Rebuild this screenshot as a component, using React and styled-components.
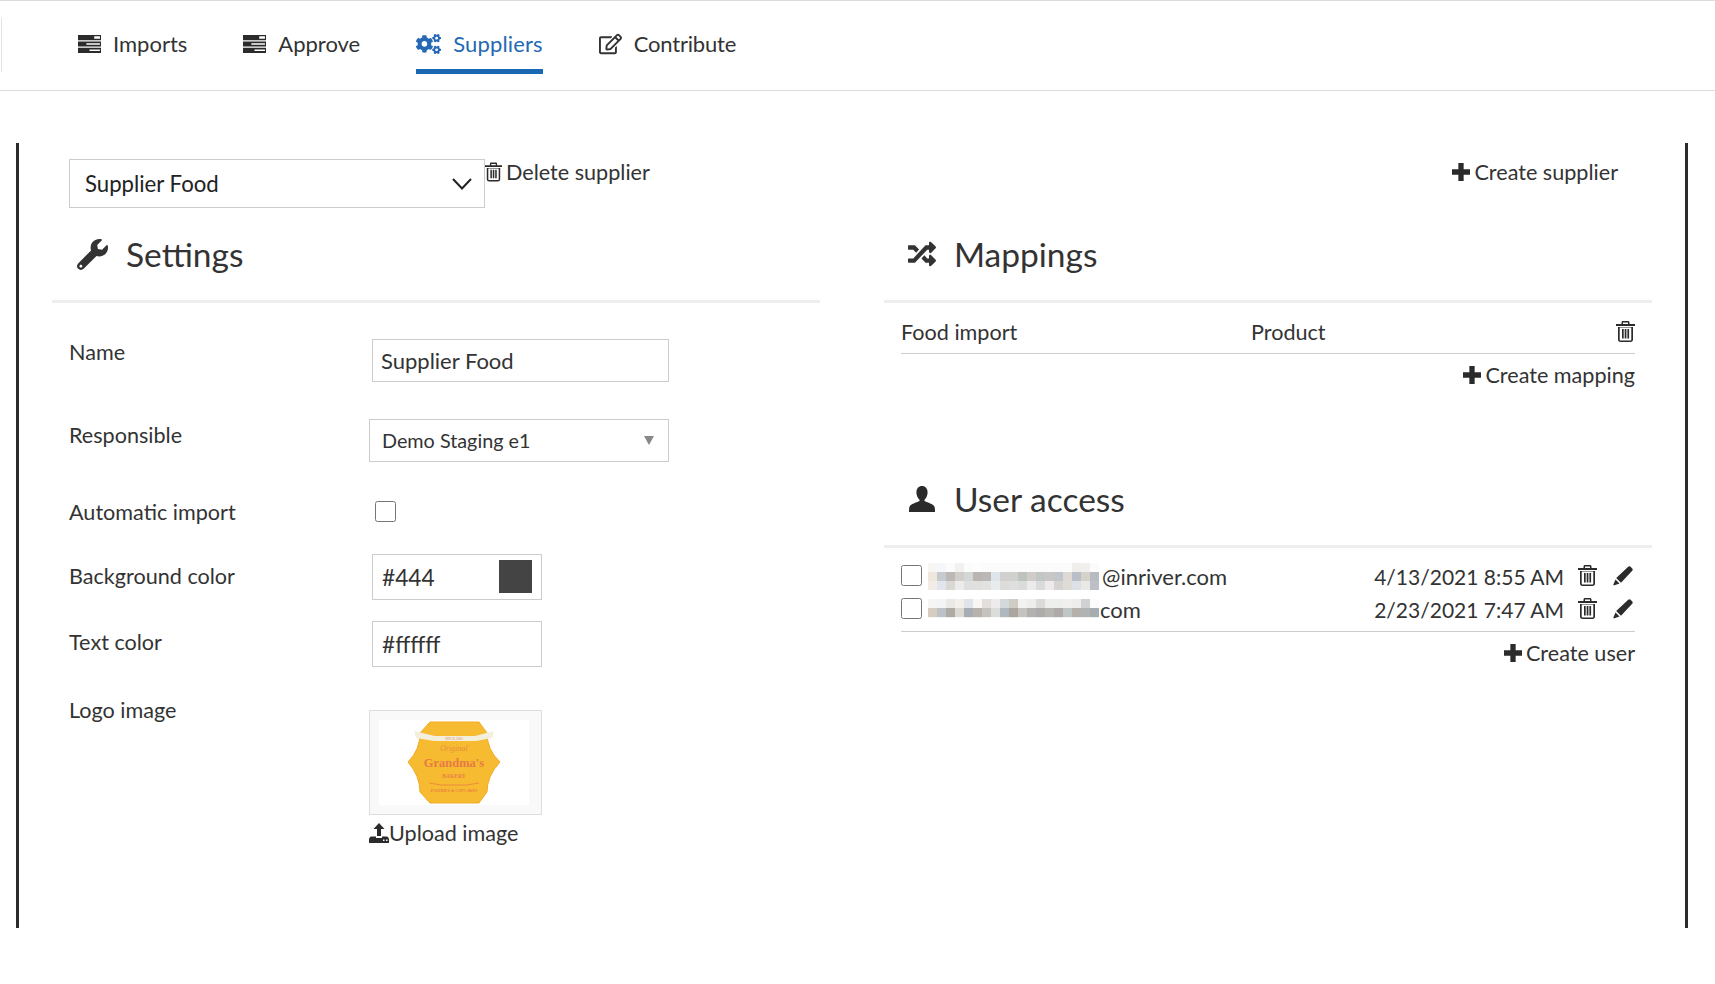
import React from 'react';
import styled, { createGlobalStyle } from 'styled-components';
import { FaCogs, FaRegEdit, FaWrench, FaRandom } from 'react-icons/fa';

const Global = createGlobalStyle`
  html, body { margin: 0; padding: 0; background: #fff; }
  body {
    font-family: Lato, "Liberation Sans", sans-serif;
    font-size: 21.6px;
    line-height: 28px;
    color: #333;
  }
`;

const Nav = styled.nav`
  position: relative;
  display: flex;
  gap: 56px;
  height: 89px;
  padding-left: 78px;
  border-top: 1px solid #dcdcdc;
  border-bottom: 1px solid #dcdcdc;

  &::before {
    content: '';
    position: absolute;
    left: 1px;
    top: 17px;
    height: 54px;
    border-left: 1px solid #e4e4e4;
  }
`;

const NavItem = styled.a`
  display: flex;
  align-items: flex-start;
  gap: ${(p) => p.$gap}px;
  height: 73px;
  padding-top: 29px;
  box-sizing: border-box;
  font-size: 22px;
  font-weight: 400;
  letter-spacing: ${(p) => p.$track || 0}px;
  color: ${(p) => (p.$active ? '#2569b4' : '#333')};
  border-bottom: ${(p) => (p.$active ? '5px solid #1a67b2' : '0')};
  margin-bottom: auto;

  svg {
    flex: none;
    width: ${(p) => p.$icon}px;
    height: 22px;
    margin-top: 3px;
  }
`;

const Main = styled.main`
  box-sizing: border-box;
  margin: 52px 27px 0 16px;
  height: 785px;
  padding: 16px 33px 0 33px;
  border-left: 3px solid #2b2b2b;
  border-right: 3px solid #2b2b2b;
`;

const TopBar = styled.div`
  display: flex;
  align-items: flex-start;
  padding: 0 34px 0 17px;
`;

const SupplierSelect = styled.div`
  display: flex;
  align-items: center;
  justify-content: space-between;
  box-sizing: border-box;
  width: 416px;
  height: 49px;
  padding: 0 12px 0 15px;
  border: 1px solid #ccc;
  font-size: 22.2px;
  color: #222;
`;

const LinkBtn = styled.a`
  display: inline-flex;
  align-items: center;
  gap: ${(p) => (p.$gap === undefined ? 4 : p.$gap)}px;
  color: #333;
  white-space: nowrap;

  svg {
    flex: none;
  }
`;

const TopLink = styled(LinkBtn)`
  margin-top: -1px;
`;

const PushRight = styled.div`
  display: flex;
  margin-left: auto;
`;

const Columns = styled.div`
  display: grid;
  grid-template-columns: 768px 768px;
  column-gap: 64px;
`;

const SectionHeader = styled.div`
  display: flex;
  align-items: center;
  box-sizing: border-box;
  height: 95px;
  padding: 0 0 0 ${(p) => p.$pad}px;
  border-bottom: 3px solid #eee;
  font-size: 33.5px;
  line-height: 40px;
  color: #333;

  svg {
    flex: none;
    margin-right: ${(p) => p.$gap}px;
  }
`;

const FormRow = styled.div`
  display: grid;
  grid-template-columns: 300px 1fr;
  padding-left: 17px;
  margin-top: ${(p) => p.$top}px;
`;

const Label = styled.div`
  margin-top: ${(p) => p.$top || 0}px;
`;

const TextInput = styled.input`
  display: block;
  box-sizing: border-box;
  width: ${(p) => p.$w}px;
  height: ${(p) => p.$h}px;
  margin-left: 3px;
  padding: 0 ${(p) => p.$padX}px;
  border: 1px solid #ccc;
  border-radius: 0;
  font: 400 ${(p) => p.$fs}px Lato, sans-serif;
  color: #333;
  outline: none;
`;

const ResponsibleSelect = styled.div`
  display: flex;
  align-items: center;
  justify-content: space-between;
  box-sizing: border-box;
  width: 300px;
  height: 43px;
  padding: 0 14px 1px 12px;
  border: 1px solid #ccc;
  font-size: 19.8px;
`;

const Caret = styled.span`
  width: 0;
  height: 0;
  margin-top: 1px;
  border-left: 5.5px solid transparent;
  border-right: 5.5px solid transparent;
  border-top: 9px solid #888;
`;

const CheckBox = styled.input.attrs({ type: 'checkbox' })`
  display: block;
  width: 21px;
  height: 21px;
  margin: ${(p) => p.$margin};
`;

const ColorField = styled.div`
  position: relative;
  width: 173px;
`;

const Swatch = styled.span`
  position: absolute;
  right: 10px;
  top: 6px;
  width: 33px;
  height: 33px;
  background: #444;
`;

const LogoBox = styled.div`
  box-sizing: border-box;
  width: 173px;
  height: 105px;
  margin-top: 13px;
  padding: 9px;
  background: #f9f9f9;
  border: 1px solid #ddd;

  svg {
    display: block;
  }
`;

const UploadLink = styled(LinkBtn)`
  margin-top: 4px;
`;

const MappingRow = styled.div`
  display: grid;
  grid-template-columns: 350px 1fr auto;
  align-items: center;
  height: 51px;
  margin: 0 17px;
  box-sizing: border-box;
  padding-top: 8px;
  border-bottom: 1px solid #ccc;
`;

const MappingDelete = styled.span`
  display: flex;
  margin-bottom: 2px;
`;

const RightAction = styled.div`
  display: flex;
  justify-content: flex-end;
  margin: 7px 17px 0;
`;

const UserHeaderWrap = styled.div`
  margin-top: 64px;
`;

const UserList = styled.div`
  margin: 0 17px;
  padding: 12px 0 5px;
  border-bottom: 1px solid #ccc;
`;

const UserRow = styled.div`
  display: flex;
  align-items: center;
  height: 33px;
`;

const UserCheck = styled(CheckBox)`
  position: relative;
  top: -1px;
`;

const Email = styled.span`
  display: flex;
  align-items: center;
  margin-left: 6px;
  flex: 1;
  font-size: 22px;

  svg {
    flex: none;
    margin-right: ${(p) => p.$after}px;
  }
`;

const DateText = styled.span`
  font-size: 21px;
  white-space: nowrap;
`;

const RowIcons = styled.span`
  display: flex;
  align-items: center;
  gap: 16px;
  margin: 0 2px 2px 14px;
`;

const TasksIcon = () => (
  <svg viewBox="0 0 22 17" fill="#2b2b2b">
    <path fillRule="evenodd" d="M0 0h22v5H0zM15.500 1.200v2.300h5.500V1.200zM0 6h22v5H0zM8 7.800v1.300h13V7.800zM0 12h22v5H0zM11 13.800v1.400h10v-1.400z" />
  </svg>
);

const TrashIcon = ({ w = 19, h = 21 }) => (
  <svg width={w} height={h} viewBox="0 0 19 21" fill="#2b2b2b">
    <path d="M5.500 3V1.500C5.500.6 6.100 0 7 0h5c.9 0 1.500.6 1.500 1.500V3H19v2H0V3zM7 1.500V3h5V1.500z" fillRule="evenodd" />
    <path fillRule="evenodd" d="M2 6h15v12.500c0 1.500-1 2.500-2.500 2.500h-10C3 21 2 20 2 18.500zM3.700 6.500v12c0 .6.400 1 1 1h9.600c.6 0 1-.4 1-1v-12z" />
    <path d="M6 8h1.700v9.500H6zM8.700 8h1.700v9.500H8.700zM11.400 8h1.700v9.500h-1.700z" />
  </svg>
);

const PencilIcon = () => (
  <svg width="20" height="20" viewBox="0 0 20 20" fill="#2b2b2b">
    <path d="M15.200.8c.7-.7 1.700-.7 2.400 0l1.600 1.600c.7.700.7 1.700 0 2.400L8 16.800 3.200 12z" />
    <path d="M2.500 13.500l4 4-5 1.800c-.8.300-1.300-.2-1-1z" />
  </svg>
);

const PlusIcon = () => (
  <svg width="18" height="18" viewBox="0 0 17 17" fill="#2b2b2b">
    <path d="M6 0h5v6h6v5h-6v6H6v-6H0V6h6z" />
  </svg>
);

const UserIcon = () => (
  <svg width="26" height="26" viewBox="0 0 26 26" fill="#2b2b2b">
    <path d="M13 0c3.400 0 5.600 2.600 5.600 6.200 0 3-1.300 5.800-2.900 7.200-.5.500-.4 1.500.2 1.900 3 1.600 8 2.400 9.600 5.400.4 1 .5 3.200.5 5.300H0c0-2.100.1-4.300.5-5.300 1.600-3 6.600-3.800 9.600-5.400.6-.4.7-1.400.2-1.900C8.700 12 7.400 9.200 7.400 6.200 7.400 2.600 9.600 0 13 0z" />
  </svg>
);

const UploadIcon = () => (
  <svg width="20" height="20" viewBox="0 0 20 20" fill="#2b2b2b">
    <path fillRule="evenodd" d="M10 0l5.500 6H12v7H8V6H4.500zM0 17c0-2 1-3.500 2.500-3.500H7V15h6v-1.500h4.500C19 13.500 20 15 20 17v3H0zM14 16.500v1.500h1.500v-1.500zM17 16.500v1.500h1.500v-1.500z" />
  </svg>
);

const Mosaic = ({ rows, h }) => (
  <svg width={rows[0].length * 9} height={h} viewBox={`0 0 ${rows[0].length * 9} ${h}`}>
    {rows.map((row, y) =>
      row.map((c, x) => <rect key={`${x}-${y}`} x={x * 9} y={y * 9} width="9.2" height="9.2" fill={c} />)
    )}
  </svg>
);

const W = '#fbfbfb';
const mailOne = [
  ['#f8f6f3', '#f5f7fb', W, '#f1f1f0', W, '#fdfdfd', W, W, W, W, W, W, W, W, W, W, '#f0eeeb', '#f2f0ee', W],
  ['#efe6de', '#c5cacf', '#bcb8b5', '#cfcecb', '#d3d8d6', '#b8b5b2', '#bbb9b5', '#dfe5ec', '#d2d0ce', '#d0d0ce', '#bfc3be', '#cfccca', '#c1c6c6', '#c9c6c6', '#c2c5ca', '#ded9d2', '#b9bec8', '#d5d2cc', '#b8bcc2'],
  ['#f3ece6', '#e2e6ec', '#d9d8d5', '#ecebe9', '#dedfde', '#e0e0df', '#e2e2e1', '#e9ecef', '#dcdcda', '#dfe0de', '#d9dcda', '#eceaea', '#d9dbda', '#eeeaec', '#d6d4d2', '#dfdbd7', '#dde0e4', '#ebe9e6', '#bcc0c6'],
];
const mailTwo = [
  ['#f6f5f3', '#f2f4f5', '#e9e9e8', '#f3efe9', '#dfe4e8', '#f8f7f5', '#e3dfdd', '#eeecea', '#d4d9dc', '#cfccc6', '#f2f2f0', '#ededeb', '#dcdad8', '#eeeeec', '#ecefee', '#f1f0ee', '#eeedeb', '#cfd2d3', W],
  ['#d6cdc0', '#bcc2c6', '#aeaaa5', '#dcd9d2', '#a6adb3', '#b8b2ad', '#c6c2be', '#dcdcda', '#afb8bf', '#aaa59e', '#c6c3bf', '#b2b1af', '#adacaa', '#b6b5b2', '#aeaaa8', '#bec7c6', '#b6b0ab', '#b1b2b2', '#a5adae'],
];

const HeaderRule = ({ pad, gap, icon, children }) => (
  <SectionHeader $pad={pad} $gap={gap}>
    {icon}
    {children}
  </SectionHeader>
);

function Logo() {
  return (
    <svg width="150" height="85" viewBox="0 0 150 85" fontFamily="Liberation Serif, serif">
      <rect width="150" height="85" fill="#fff" />
      <path
        d="M51 2H100L108 13Q108 30 121 42Q108 56 108 72L100 83H51L41 72Q41 56 29 42Q41 30 41 13Z"
        fill="#f6bb31"
        stroke="#f2ac22"
        strokeWidth="1"
      />
      <path d="M35 11L56 16H96L115 11L113 18L97 21H55L37 18Z" fill="#f3efdc" />
      <text x="75" y="19.500" fontSize="3.500" fill="#d98a6a" textAnchor="middle">SINCE 2001</text>
      <text x="75" y="31" fontSize="8" fontStyle="italic" fill="#e98d3f" textAnchor="middle">Original</text>
      <text x="75" y="47" fontSize="12.500" fontWeight="bold" fill="#e77a45" textAnchor="middle">Grandma's</text>
      <text x="75" y="58" fontSize="5.500" fontWeight="bold" fill="#e98044" textAnchor="middle">BAKERY</text>
      <path d="M50 63q12 3 25 2q13 1 25-2" stroke="#e98044" strokeWidth="0.8" fill="none" />
      <text x="75" y="72" fontSize="4" fontWeight="bold" fill="#e98044" textAnchor="middle">PASTRIES &amp; CUPCAKES</text>
    </svg>
  );
}

export default function App() {
  return (
    <>
      <Global />
      <Nav>
        <NavItem $gap={12} $icon={23}><TasksIcon />Imports</NavItem>
        <NavItem $gap={12} $icon={23}><TasksIcon />Approve</NavItem>
        <NavItem $gap={12} $icon={25} $track={0.15} $active><FaCogs />Suppliers</NavItem>
        <NavItem $gap={12} $icon={23} $track={-0.2}><FaRegEdit />Contribute</NavItem>
      </Nav>
      <Main>
        <TopBar>
          <SupplierSelect>
            Supplier Food
            <svg width="20" height="12" viewBox="0 0 20 12" fill="none" stroke="#222" strokeWidth="2">
              <path d="M1 1l9 9.500L19 1" />
            </svg>
          </SupplierSelect>
          <TopLink>
            <TrashIcon w={17} h={20} />
            Delete supplier
          </TopLink>
          <PushRight>
            <TopLink><PlusIcon />Create supplier</TopLink>
          </PushRight>
        </TopBar>
        <Columns>
          <section>
            <HeaderRule pad={25} gap={18} icon={<FaWrench size={31} />}>Settings</HeaderRule>
            <FormRow $top={36}>
              <Label $top={-1}>Name</Label>
              <TextInput defaultValue="Supplier Food" $w={297} $h={43} $padX={8} $fs={22} readOnly />
            </FormRow>
            <FormRow $top={37}>
              <Label $top={2}>Responsible</Label>
              <ResponsibleSelect>Demo Staging e1<Caret /></ResponsibleSelect>
            </FormRow>
            <FormRow $top={37}>
              <Label $top={-1}>Automatic import</Label>
              <CheckBox $margin="2px 0 0 6px" />
            </FormRow>
            <FormRow $top={28}>
              <Label $top={8}>Background color</Label>
              <ColorField>
                <TextInput defaultValue="#444" $w={170} $h={46} $padX={9} $fs={22.700} readOnly />
                <Swatch />
              </ColorField>
            </FormRow>
            <FormRow $top={21}>
              <Label $top={7}>Text color</Label>
              <TextInput defaultValue="#ffffff" $w={170} $h={46} $padX={9} $fs={22.700} readOnly />
            </FormRow>
            <FormRow $top={30}>
              <Label $top={-1}>Logo image</Label>
              <div>
                <LogoBox><Logo /></LogoBox>
                <UploadLink $gap={0}><UploadIcon />Upload image</UploadLink>
              </div>
            </FormRow>
          </section>
          <section>
            <HeaderRule pad={24} gap={18} icon={<FaRandom size={28} />}>Mappings</HeaderRule>
            <MappingRow>
              <span>Food import</span>
              <span>Product</span>
              <MappingDelete><TrashIcon /></MappingDelete>
            </MappingRow>
            <RightAction>
              <LinkBtn><PlusIcon />Create mapping</LinkBtn>
            </RightAction>
            <UserHeaderWrap>
              <HeaderRule pad={25} gap={19} icon={<UserIcon />}>User access</HeaderRule>
            </UserHeaderWrap>
            <UserList>
              <UserRow>
                <UserCheck $margin="0" />
                <Email $after={3}><Mosaic rows={mailOne} h={27} />@inriver.com</Email>
                <DateText>4/13/2021 8:55 AM</DateText>
                <RowIcons><TrashIcon /><PencilIcon /></RowIcons>
              </UserRow>
              <UserRow>
                <UserCheck $margin="0" />
                <Email $after={1}><Mosaic rows={mailTwo} h={21} />com</Email>
                <DateText>2/23/2021 7:47 AM</DateText>
                <RowIcons><TrashIcon /><PencilIcon /></RowIcons>
              </UserRow>
            </UserList>
            <RightAction>
              <LinkBtn><PlusIcon />Create user</LinkBtn>
            </RightAction>
          </section>
        </Columns>
      </Main>
    </>
  );
}
